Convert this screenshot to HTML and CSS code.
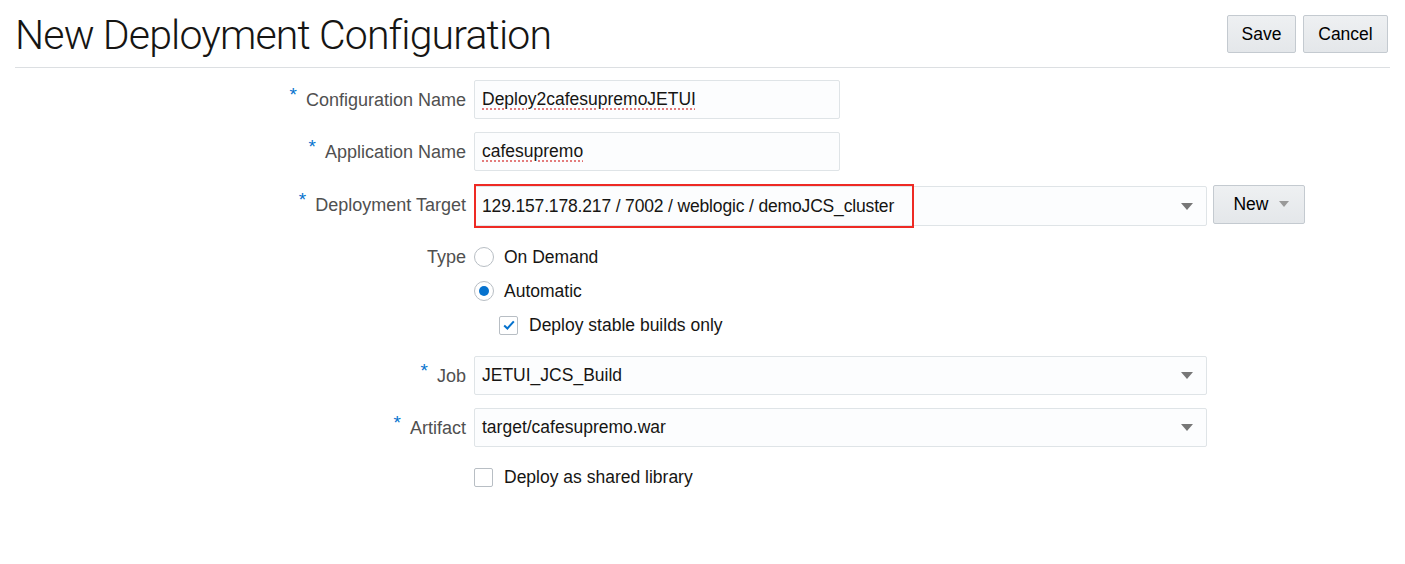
FILE: index.html
```html
<!DOCTYPE html>
<html>
<head>
<meta charset="utf-8">
<link rel="stylesheet" href="styles.css">
</head>
<body>
<header class="header">
  <h1 class="title">New Deployment Configuration</h1>
  <div class="actions">
    <button class="btn save">Save</button>
    <button class="btn cancel">Cancel</button>
  </div>
</header>
<form class="form">
  <label class="label req">Configuration Name</label>
  <div class="control"><div class="input short"><span class="spell">Deploy2cafesupremoJETUI</span></div></div>

  <label class="label req">Application Name</label>
  <div class="control"><div class="input short"><span class="spell">cafesupremo</span></div></div>

  <label class="label req">Deployment Target</label>
  <div class="control target">
    <div class="input select tall">
      <span class="highlight">129.157.178.217 / 7002 / weblogic / demoJCS_cluster</span>
      <span class="caret"></span>
    </div>
    <button type="button" class="btn new">New <span class="caret small"></span></button>
  </div>

  <label class="label type-label">Type</label>
  <div class="control options">
    <div class="opt"><span class="radio"></span>On Demand</div>
    <div class="opt"><span class="radio on"></span>Automatic</div>
    <div class="opt sub"><span class="check on"><svg viewBox="0 0 16 16" width="14" height="14"><path d="M2.5 8.5 L6.2 12 L13.5 3.8" fill="none" stroke="#0572ce" stroke-width="2.3"/></svg></span>Deploy stable builds only</div>
  </div>

  <label class="label req">Job</label>
  <div class="control"><div class="input select"><span>JETUI_JCS_Build</span><span class="caret"></span></div></div>

  <label class="label req">Artifact</label>
  <div class="control"><div class="input select"><span>target/cafesupremo.war</span><span class="caret"></span></div></div>

  <span class="label"></span>
  <div class="control"><div class="opt"><span class="check"></span>Deploy as shared library</div></div>
</form>
</body>
</html>
```

FILE: styles.css
```css
* { box-sizing: border-box; }
html, body { margin: 0; background: #fff; }
body {
  font-family: "Liberation Sans", Arial, sans-serif;
  font-size: 17.5px;
  color: #333;
  width: 1405px;
  height: 564px;
  overflow: hidden;
}
.header {
  margin: 0 15px;
  height: 68px;
  border-bottom: 1px solid #dcdfe2;
  display: flex;
  justify-content: space-between;
  align-items: flex-start;
}
.title {
  margin: 11px 0 0 0;
  font-family: Roboto, "Liberation Sans", sans-serif;
  font-weight: 300;
  font-size: 41px;
  line-height: 48px;
  color: #161513;
  letter-spacing: -0.85px;
}
.actions {
  display: flex;
  gap: 7px;
  margin: 15px 2px 0 0;
}
.btn {
  font-family: "Liberation Sans", Arial, sans-serif;
  font-size: 17.5px;
  color: #000;
  height: 38px;
  padding: 0;
  background: linear-gradient(#eef0f2, #e4e7ea);
  border: 1px solid #c4cad0;
  border-radius: 2px;
}
.save { width: 69px; }
.cancel { width: 85px; }
.form {
  display: grid;
  grid-template-columns: 466px auto;
  column-gap: 8px;
  row-gap: 13px;
  margin-top: 12px;
  align-items: center;
}
.label {
  text-align: right;
  color: #505050;
  font-size: 18px;
  align-self: center;
}
.req::before {
  content: "*";
  color: #0572ce;
  font-size: 19px;
  position: relative;
  top: -5px;
  margin-right: 9px;
}
.control { display: flex; align-items: center; }
.input {
  height: 39px;
  border: 1px solid #dfe4e7;
  border-radius: 2px;
  background: #fcfdfe;
  display: flex;
  align-items: center;
  padding: 0 7px;
  color: #161513;
  flex: none;
}
.short { width: 366px; }
.select { width: 733px; justify-content: space-between; }
.tall { height: 40px; padding-left: 0; margin-top: 2px; }
.spell {
  text-decoration: underline dotted #e06a6a;
  text-underline-offset: 4px;
}
.highlight {
  height: 44px;
  width: 440px;
  border: 2px solid #ee2a24;
  display: flex;
  align-items: center;
  padding: 0 0 0 6px;
  margin-left: -1px;
  letter-spacing: -0.16px;
  white-space: nowrap;
}
.caret {
  width: 0; height: 0;
  border-left: 6px solid transparent;
  border-right: 6px solid transparent;
  border-top: 7px solid #777;
  margin-right: 6px;
}
.caret.small {
  display: inline-block;
  border-left-width: 5px;
  border-right-width: 5px;
  border-top: 6px solid #999;
  margin: 0 0 2px 10px;
  vertical-align: middle;
}
.target { gap: 6px; }
.new {
  flex: none;
  height: 39px;
  width: 92px;
  padding: 0 0 0 4px;
  margin-top: -1px;
  display: flex;
  align-items: center;
  justify-content: center;
}
.type-label { align-self: start; margin-top: 1px; line-height: 34px; }
.options {
  flex-direction: column;
  align-items: flex-start;
  gap: 0;
  margin-top: 1px;
  margin-bottom: 1px;
}
.opt {
  display: flex;
  align-items: center;
  height: 34px;
  color: #161513;
}
.opt.sub { margin-left: 25px; }
.radio {
  width: 20px; height: 20px;
  border: 1px solid #b8bec4;
  border-radius: 50%;
  background: #fff;
  margin-right: 10px;
  display: flex; align-items: center; justify-content: center;
}
.radio.on::after {
  content: "";
  width: 10px; height: 10px;
  border-radius: 50%;
  background: #0572ce;
}
.check {
  width: 19px; height: 19px;
  border: 1px solid #b8bec4;
  border-radius: 2px;
  background: #fff;
  margin-right: 11px;
  display: flex; align-items: center; justify-content: center;
}
```
